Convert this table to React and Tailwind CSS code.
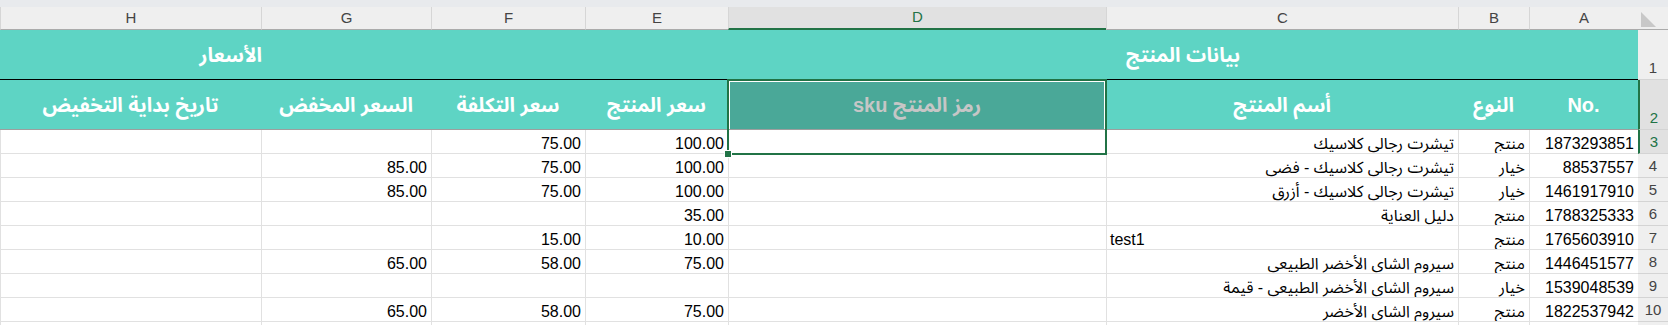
import React from "react";

const cols = "grid grid-cols-[30px_109px_71px_352px_378px_143px_154px_170px_261px]";

const rows = [
  { n: 3, no: "1873293851", type: "منتج", name: "تيشرت رجالي كلاسيك", price: "100.00", cost: "75.00", sale: "" },
  { n: 4, no: "88537557", type: "خيار", name: "تيشرت رجالي كلاسيك - فضي", price: "100.00", cost: "75.00", sale: "85.00" },
  { n: 5, no: "1461917910", type: "خيار", name: "تيشرت رجالي كلاسيك - أزرق", price: "100.00", cost: "75.00", sale: "85.00" },
  { n: 6, no: "1788325333", type: "منتج", name: "دليل العناية", price: "35.00", cost: "", sale: "" },
  { n: 7, no: "1765603910", type: "منتج", name: "test1", latin: true, price: "10.00", cost: "15.00", sale: "" },
  { n: 8, no: "1446451577", type: "منتج", name: "سيروم الشاي الأخضر الطبيعي", price: "75.00", cost: "58.00", sale: "65.00" },
  { n: 9, no: "1539048539", type: "خيار", name: "سيروم الشاي الأخضر الطبيعي - قيمة", price: "", cost: "", sale: "" },
  { n: 10, no: "1822537942", type: "منتج", name: "سيروم الشاي الأخضر", price: "75.00", cost: "58.00", sale: "65.00" },
];

const letters = ["A", "B", "C", "D", "E", "F", "G", "H"];
const headers = ["No.", "النوع", "أسم المنتج", "رمز المنتج sku", "سعر المنتج", "سعر التكلفة", "السعر المخفض", "تاريخ بداية التخفيض"];

const Cell = ({ children, left, className = "" }) => (
  <div
    className={`flex h-[24px] items-end overflow-hidden whitespace-nowrap border-b border-l border-[#e1e1e1] px-[4px] text-[16px] leading-[18px] text-black ${left ? "justify-end" : "justify-start"} ${className}`}
  >
    {children}
  </div>
);

const RowHead = ({ n, selected, className = "" }) => (
  <div
    className={`flex items-end justify-center border-b border-[#d4d4d4] pb-[1px] text-[15px] leading-[20px] ${selected ? "border-l-2 border-l-[#217346] bg-[#e1e1e1] text-[#217346]" : "bg-[#efefef] text-[#444]"} ${className}`}
  >
    {n}
  </div>
);

export default function App() {
  return (
    <div className="h-[325px] w-[1668px] overflow-hidden bg-white font-['Liberation_Sans','Noto_Sans_Arabic','DejaVu_Sans',sans-serif]">
      <div className="h-[7px] bg-[#e8eaed]" />

      <div dir="rtl" className={cols}>
        {/* column letters */}
        <div className="flex h-[23px] items-end justify-end border-b border-[#ababab] bg-[#efefef] pb-[2px] pl-[3px]">
          <svg width="15" height="15" viewBox="0 0 15 15">
            <polygon points="0,0 0,15 15,15" fill="#c8c8c8" />
          </svg>
        </div>
        {letters.map((l) => (
          <div
            key={l}
            className={`flex h-[23px] items-center justify-center border-l border-[#d6d6d6] text-[15px] ${l === "D" ? "border-b-2 border-b-[#217346] bg-[#e1e1e1] text-[#217346]" : "border-b border-b-[#ababab] bg-[#efefef] text-[#444]"}`}
          >
            {l}
          </div>
        ))}

        {/* row 1 */}
        <RowHead n={1} className="h-[50px]" />
        <div className="col-span-4 flex h-[50px] items-center justify-center border-b border-black bg-[#5ed4c4] text-[20px] font-bold text-white">
          بيانات المنتج
        </div>
        <div className="col-span-4 flex h-[50px] items-center justify-start border-b border-black bg-[#5ed4c4] pr-[466px] text-[20px] font-bold text-white">
          الأسعار
        </div>

        {/* row 2 */}
        <RowHead n={2} selected className="h-[50px]" />
        {headers.map((h, i) =>
          i === 3 ? (
            <div
              key={h}
              className="relative flex h-[50px] items-center justify-center border-b border-[#9e9e9e] bg-[#4aa898] text-[20px] font-bold text-[#c6c6c6]"
            >
              {h}
              <div className="absolute left-[-1px] top-[-1px] z-10 h-[76px] w-[380px] border-2 border-[#217346]">
                <div className="h-[48px] border border-b-0 border-white" />
                <div className="absolute bottom-[-5px] left-[-5px] h-[8px] w-[8px] border border-white bg-[#217346]" />
              </div>
            </div>
          ) : (
            <div
              key={h}
              className="flex h-[50px] items-center justify-center border-b border-[#9e9e9e] bg-[#5ed4c4] text-[20px] font-bold text-white"
            >
              <span dir={i === 0 ? "ltr" : undefined}>{h}</span>
            </div>
          )
        )}

        {/* data */}
        {rows.map((r) => (
          <React.Fragment key={r.n}>
            <RowHead n={r.n} selected={r.n === 3} className="h-[24px]" />
            <Cell>{r.no}</Cell>
            <Cell>{r.type}</Cell>
            <Cell left={r.latin} className={r.latin ? "pl-[3px]" : ""}>{r.name}</Cell>
            <Cell />
            <Cell>{r.price}</Cell>
            <Cell>{r.cost}</Cell>
            <Cell>{r.sale}</Cell>
            <Cell />
          </React.Fragment>
        ))}

        {/* top of row 11 */}
        <RowHead className="h-[24px]" />
        {letters.map((l) => (
          <Cell key={l} />
        ))}
      </div>
    </div>
  );
}
